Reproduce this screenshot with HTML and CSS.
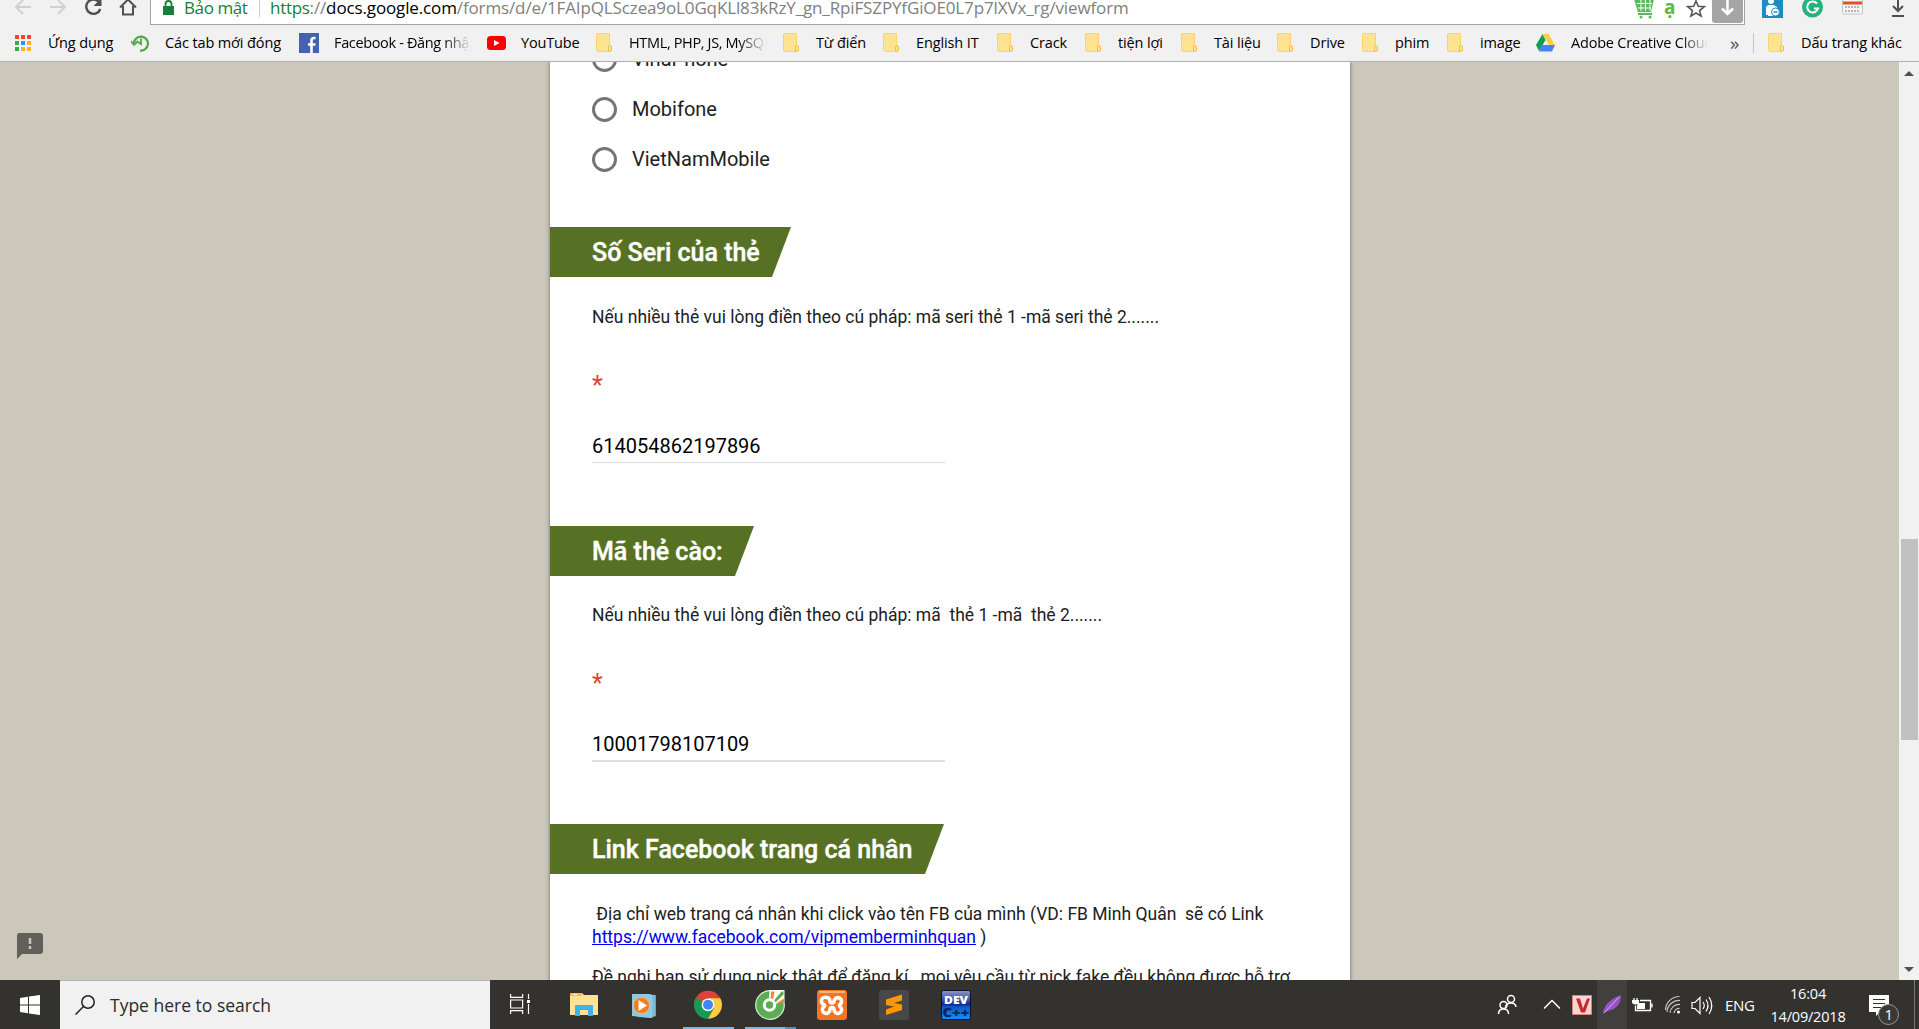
FILE: index.html
```html
<!DOCTYPE html>
<html lang="vi">
<head>
<meta charset="utf-8">
<title>Form</title>
<link rel="stylesheet" href="styles.css">
</head>
<body>
<svg class="defs" width="0" height="0" aria-hidden="true">
  <symbol id="folder" viewBox="0 0 16 19"><path d="M1 .5h12.500v13h2v4l-1 1H1.500l-1-1V1z" fill="#fee391" stroke="#f8d568"/><path d="M12.500 18v-4.500q1.500-1.500 3 0V17l-1 1z" fill="#fee79b" stroke="#eec13f"/></symbol>
</svg>
<div class="screen">
  <header class="toolbar">
    <svg class="nav-icons" width="150" height="25" viewBox="0 0 150 25" fill="none" stroke="#d0d0d0" stroke-width="2">
      <path d="M31 7H16M23 0l-7 7 7 7M50 7h15M58 0l7 7-7 7"/>
      <path d="M99 2a7.200 7.200 0 1 0 1.300 7" stroke="#505050" stroke-width="2.400"/><path d="M101.500 -2v8h-8z" fill="#505050" stroke="none"/>
      <path d="M120 7.500l8-8 8 8M123 6v8.500h10V6" stroke="#505050"/>
    </svg>
    <div class="omnibox">
      <svg class="lock" width="11" height="16" viewBox="0 0 11 16"><path d="M0 6h11v9H0z" fill="#148038"/><path d="M2.500 7V4a3 3 0 0 1 6 0v3" fill="none" stroke="#148038" stroke-width="1.800"/></svg>
      <span class="secure">Bảo mật</span><i class="divider"></i>
      <span class="url"><b>https</b>://<em>docs.google.com</em>/forms/d/e/1FAIpQLSczea9oL0GqKLl83kRzY_gn_RpiFSZPYfGiOE0L7p7lXVx_rg/viewform</span>
      <svg class="omni-icons" width="110" height="24" viewBox="1634 0 110 24">
        <path d="M1634 -1h20l-3 13h-13z" fill="#5cb85c"/><path d="M1637 3.500h15M1638 8h13M1641 0v11M1645.500 0v11M1650 0v11" stroke="#fff"/><path d="M1638 14h14" stroke="#5cb85c" stroke-width="2"/><circle cx="1641" cy="17" r="1.500" fill="#5cb85c"/><circle cx="1650" cy="17" r="1.500" fill="#5cb85c"/>
        <text x="1664" y="13.500" class="viet-a">ạ</text>
        <path d="M1696 1l2.300 5.300 6 .4-4.700 3.900 1.500 5.500-5.100-3.100-5.100 3.100 1.500-5.500-4.700-3.900 6-.4z" fill="none" stroke="#555" stroke-width="1.600"/>
        <path d="M1712 0h31v20q0 3-3 3h-25q-3 0-3-3z" fill="#a5a5a5"/><path d="M1727.500 0v14M1722 8.500l5.500 5.500 5.500-5.500" fill="none" stroke="#fff" stroke-width="2.500"/>
      </svg>
    </div>
    <svg class="ext-icons" width="174" height="25" viewBox="1745 0 174 25">
      <path d="M1762 0h21v18h-21z" fill="#1b8cc4"/><circle cx="1771" cy="1" r="3" fill="#fff"/><path d="M1768 5h6l3 2v8h-3v1h-6v-1h-2V7z" fill="#fff"/><circle cx="1775.500" cy="12" r="4" fill="#fff" stroke="#1b8cc4"/><path d="M1773.500 12h4" stroke="#1b8cc4" stroke-width="1.500"/>
      <circle cx="1812.500" cy="7" r="10.500" fill="#25b27c"/><path d="M1817 3.500a5.500 5.500 0 1 0 1 5h-4" fill="none" stroke="#fff" stroke-width="2"/>
      <rect x="1842.500" y="-2" width="20" height="16" rx="2" fill="#f6f6f6" stroke="#c4c4c4"/><path d="M1843 3h19" stroke="#e3501c" stroke-width="3"/><path d="M1845 7h15M1845 11h15" stroke="#777" stroke-dasharray="2 1"/>
      <path d="M1898 0v11M1893 6l5 5 5-5M1892 16h12" fill="none" stroke="#505050" stroke-width="2"/>
    </svg>
  </header>

  <nav class="bookmarks">
    <a class="bm w1"><svg width="16" height="16" viewBox="0 0 16 16"><path d="M0 0h4v4H0zM6 0h4v4H6zM12 0h4v4h-4z" fill="#f44336"/><path d="M0 6h4v4H0z" fill="#34a853"/><path d="M6 6h4v4H6z" fill="#2196f3"/><path d="M12 6h4v4h-4zM6 12h4v4H6zM12 12h4v4h-4z" fill="#fbb31b"/><path d="M0 12h4v4H0z" fill="#34a853"/></svg><span>Ứng dụng</span></a>
    <a class="bm w2"><svg width="19" height="18" viewBox="0 0 19 18" fill="none" stroke="#4daa43" stroke-width="2.200"><path d="M3 9a7 7 0 1 1 6 7.500"/><path d="M0 7l3 4 4-4M10 4.500V10l-3-2" stroke-width="1.800"/></svg><span>Các tab mới đóng</span></a>
    <a class="bm w3"><svg width="20" height="20" viewBox="0 0 20 20"><path d="M0 0h20v20H0z" fill="#4163b0"/><path d="M16.500 5H15q-2.500 0-2.500 2.500V20M9 11.500h7.500" fill="none" stroke="#fff" stroke-width="2.600"/></svg><span class="fade">Facebook - Đăng nhập</span></a>
    <a class="bm w4"><svg width="19" height="14" viewBox="0 0 19 14"><rect width="19" height="14" rx="3.500" fill="#f00"/><path d="M7 4l5.500 3L7 10z" fill="#fff"/></svg><span>YouTube</span></a>
    <a class="bm w5"><svg width="16" height="19"><use href="#folder"/></svg><span class="fade">HTML, PHP, JS, MySQL</span></a>
    <a class="bm w6"><svg width="16" height="19"><use href="#folder"/></svg><span>Từ điển</span></a>
    <a class="bm w7"><svg width="16" height="19"><use href="#folder"/></svg><span>English IT</span></a>
    <a class="bm w8"><svg width="16" height="19"><use href="#folder"/></svg><span>Crack</span></a>
    <a class="bm w9"><svg width="16" height="19"><use href="#folder"/></svg><span>tiện lợi</span></a>
    <a class="bm w10"><svg width="16" height="19"><use href="#folder"/></svg><span>Tài liệu</span></a>
    <a class="bm w11"><svg width="16" height="19"><use href="#folder"/></svg><span>Drive</span></a>
    <a class="bm w12"><svg width="16" height="19"><use href="#folder"/></svg><span>phim</span></a>
    <a class="bm w13"><svg width="16" height="19"><use href="#folder"/></svg><span>image</span></a>
    <a class="bm w14"><svg width="19" height="18" viewBox="0 0 19 18"><path d="M6.500 0L0 11l3 6L9.500 6z" fill="#109d58"/><path d="M6.500 0h6L19 11h-6z" fill="#ffcd40"/><path d="M6 11h13l-3 6.500H3z" fill="#4285f4"/></svg><span class="fade">Adobe Creative Cloud</span></a>
    <span class="more">»</span>
    <a class="bm last"><svg width="16" height="19"><use href="#folder"/></svg><span>Dấu trang khác</span></a>
  </nav>

  <main class="viewport">
    <aside class="side"><svg width="26" height="26" viewBox="0 0 26 26"><path d="M2 0h21q3 0 3 3v15q0 3-3 3H5l-5 5V3q0-3 2-3z" fill="#605f59"/><path d="M13 5v6M13 13v3" stroke="#cbc8bb" stroke-width="2.500"/></svg></aside>
    <form class="card">
      <div class="options">
        <label class="option"><i class="radio"></i>VinaPhone</label>
        <label class="option"><i class="radio"></i>Mobifone</label>
        <label class="option"><i class="radio"></i>VietNamMobile</label>
      </div>
      <section class="question">
        <h2 class="banner b1"><span>Số Seri của thẻ</span></h2>
        <p class="desc">Nếu nhiều thẻ vui lòng điền theo cú pháp: mã seri thẻ 1 -mã seri thẻ 2.......</p>
        <div class="required">*</div>
        <div class="answer">614054862197896</div>
      </section>
      <section class="question second">
        <h2 class="banner b2"><span>Mã thẻ cào:</span></h2>
        <p class="desc">Nếu nhiều thẻ vui lòng điền theo cú pháp: mã&nbsp; thẻ 1 -mã&nbsp; thẻ 2.......</p>
        <div class="required">*</div>
        <div class="answer thick">10001798107109</div>
      </section>
      <section class="question">
        <h2 class="banner b3"><span>Link Facebook trang cá nhân</span></h2>
        <p class="desc">&nbsp;Địa chỉ web trang cá nhân khi click vào tên FB của mình (VD: FB Minh Quân&nbsp; sẽ có Link<br><a class="link">https://www.facebook.com/vipmemberminhquan</a> )</p>
        <p class="desc next">Đề nghị bạn sử dụng nick thật để đăng kí , mọi yêu cầu từ nick fake đều không được hỗ trợ</p>
      </section>
    </form>
    <div class="scrollbar"><i class="up"></i><i class="thumb"></i><i class="down"></i></div>
  </main>

  <footer class="taskbar">
    <div class="start"><svg width="20" height="20" viewBox="0 0 20 20" fill="#fff"><path d="M0 3l8-1.200v7.700H0zM9 1.600L20 0v9.500H9zM0 10.500h8v7.700L0 17zM9 10.500h11V20L9 18.400z"/></svg></div>
    <div class="search"><svg width="20" height="20" viewBox="0 0 20 20" fill="none" stroke="#222" stroke-width="1.500"><circle cx="13" cy="7" r="6.200"/><path d="M8.500 11.500L.5 19.500"/></svg><span>Type here to search</span></div>
    <div class="apps">
      <div class="app view"><svg width="20" height="20" viewBox="0 0 20 20" fill="none" stroke="#fff" stroke-width="1.200"><path d="M.6 0v3.400h12V0M.6 20v-3.400h12V20M.6 6h12v8H.6zM18.500 0v5M18.500 10v10"/><path d="M17 6h3v3h-3z" fill="#fff" stroke="none"/></svg></div>
      <div class="app"><svg width="30" height="30" viewBox="0 0 30 30"><path d="M1 3h12l2 2h14v20H1z" fill="#ffe394"/><path d="M1 3h12v3H1z" fill="#fbbf2d"/><path d="M4 4h4v1H4z" fill="#fff"/><path d="M6 26V15h18v11h-5v-6h-8v6z" fill="#3bb3e8"/></svg></div>
      <div class="app media"><svg width="30" height="30" viewBox="0 0 30 30"><path d="M8 4l19 1v21l-5 2L8 27z" fill="#5ba6c8"/><path d="M3 4h18l2 1v23L3 26z" fill="#91c8de"/><path d="M23 5v22M25 5v21" stroke="#9ed3e8"/><circle cx="12.500" cy="15.500" r="8" fill="#f47b20" stroke="#fdcfa6" stroke-width=".5"/><path d="M9.500 10l8.500 5.500L9.500 21z" fill="#fff"/></svg></div>
      <div class="app on"><svg width="30" height="30" viewBox="0 0 30 30"><circle cx="15" cy="14.800" r="14" fill="#db4437"/><path d="M2.900 7.800A14 14 0 0 0 15 28.800L21 18.300 15 15z" fill="#0f9d58"/><path d="M15 28.800A14 14 0 0 0 27.300 8.300H15l6 10z" fill="#ffcd40"/><circle cx="15" cy="14.800" r="6.400" fill="#fff"/><circle cx="15" cy="14.800" r="5" fill="#4285f4"/></svg></div>
      <div class="app on split"><svg width="30" height="30" viewBox="0 0 30 30"><circle cx="15" cy="15" r="14.300" fill="#5bad52" stroke="#d8edd5" stroke-width="1.200"/><path d="M14 10L14.500 0H29.500v11L19 15z" fill="#fff"/><path d="M15.500 9.500L16 1.500h3.500L18 10z" fill="#f0873a"/><path d="M19 10.500L26.500 1.500h2v3l-8 8z" fill="#5bad52"/><path d="M21 13.500l8-5v3.500l-6 2z" fill="#f0873a"/><circle cx="14.500" cy="15" r="5.200" fill="#5bad52" stroke="#fff" stroke-width="3"/></svg></div>
      <div class="app"><svg width="30" height="30" viewBox="0 0 30 30"><rect width="30" height="30" rx="3" fill="#f37423"/><path d="M2 1h26v2H2z" fill="#f9b27f"/><path d="M9 7.500a3.500 3.500 0 0 1 4 3.500q0 2 2 2t2-2a3.800 3.800 0 1 1 6 3.500q-1 1 0 2a3.800 3.800 0 1 1-6 3q0-2-2-2t-2 2a3.800 3.800 0 1 1-6-3q1-1 0-2a3.500 3.500 0 0 1 2-7z" fill="none" stroke="#fff" stroke-width="3.600"/></svg></div>
      <div class="app"><svg width="30" height="30" viewBox="0 0 30 30"><rect width="30" height="30" rx="2" fill="#48484a"/><path d="M7 9.500l16-5v6l-8 2.500 8 1.500v5.500L7 25v-5.500l8-3-8-1.500z" fill="#ff9800"/></svg></div>
      <div class="app"><svg width="30" height="30" viewBox="0 0 30 30"><defs><linearGradient id="dev" x2="0" y2="1"><stop offset="0" stop-color="#8d97c8"/><stop offset=".5" stop-color="#122a8c"/><stop offset=".55" stop-color="#0a56c8"/><stop offset="1" stop-color="#1590ff"/></linearGradient></defs><rect x=".5" y=".5" width="29" height="29" rx="2" fill="url(#dev)" stroke="#06122e"/><text x="3" y="13.500" class="dev-text" textLength="24" lengthAdjust="spacingAndGlyphs">DEV</text><text x="1.500" y="27" class="cpp-text" textLength="27" lengthAdjust="spacingAndGlyphs">C++</text></svg></div>
    </div>
    <svg class="tray" width="238" height="49" viewBox="1487 980 238 49" fill="none" stroke="#fff" stroke-width="1.500">
      <circle cx="1511" cy="999" r="3.500"/><path d="M1505.500 1007q1-4 5.500-4t5 4"/><circle cx="1503.500" cy="1005" r="3.500"/><path d="M1498.500 1014q0-5 5-5t5 5"/>
      <path d="M1544 1008.500l8-8 8 8"/>
      <path d="M1572.500 995.500h19v19h-19z" fill="#f9d4d1" stroke="#da817c" stroke-width="1"/><path d="M1576 998.500h4l3 10 4-10h3l-5 14h-4z" fill="#c52b28" stroke="none"/>
      <path d="M1597 980h30v49h-30z" fill="#42403d" stroke="none"/><path d="M1603 1014q1-13 18-19 0 13-13 16-3 1-5 3z" fill="#9653c6" stroke="none"/><path d="M1604 1013l15-16" stroke="#d7a9ef" stroke-width="1"/>
      <path d="M1640 1000.500h10.500v10h-15v-5M1652 1003.500v4M1634 998v3M1637 998v3" stroke-width="1.300"/><path d="M1632 1000h7v3q-3.500 3-7 0zM1638 1003h7v6h-8v-3z" fill="#fff" stroke="none"/>
      <path d="M1665.500 1010a14 14 0 0 1 14-13.500M1667 1012a12 12 0 0 1 13-11.500M1670 1013a9 9 0 0 1 10-8.500M1674 1013a5 5 0 0 1 5.500-4.500" stroke="#c9c9c7" stroke-width="1.200"/><circle cx="1678.500" cy="1012" r="1.500" fill="#fff" stroke="none"/>
      <path d="M1692 1002.500h3l5-5v16l-5-5h-3zM1703 1002q2.500 3.500 0 7M1706 999.500q4 6 0 12M1709 997q5.500 8.500 0 17" stroke-width="1.200"/>
    </svg>
    <span class="lang">ENG</span>
    <div class="clock"><span>16:04</span><span class="date">14/09/2018</span></div>
    <svg class="notice" width="60" height="49" viewBox="1859 980 60 49"><path d="M1869 995h20v17h-9l-4 4v-4h-7z" fill="#fff"/><path d="M1873 999.500h12M1873 1003.500h12M1873 1007.500h8" stroke="#34322e"/><circle cx="1888.500" cy="1014.500" r="10" fill="#3b3935" stroke="#9a9994"/><text x="1884.500" y="1020" class="count">1</text><path d="M1914.500 980v49" stroke="#77756f"/></svg>
  </footer>
</div>
</body>
</html>
```
FILE: styles.css
```css
* { box-sizing: border-box; }
body { margin: 0; font-family: "Open Sans", "Noto Sans", sans-serif; }
svg { display: block; flex: none; }
.defs { position: absolute; }
.screen { width: 1919px; height: 1029px; display: flex; flex-direction: column; overflow: hidden; background: #f1f1f1; }

.toolbar { height: 25px; flex: none; display: flex; overflow: hidden; }
.omnibox { width: 1595px; height: 25px; display: flex; align-items: flex-start; background: #fff; border: solid #a3a3a3; border-width: 0 1px 1px; padding-left: 12px; white-space: nowrap; }
.secure, .url { font-size: 17px; line-height: 24px; margin-top: -4px; }
.secure { width: 75px; margin-left: 10px; color: #148038; letter-spacing: -.4px; }
.divider { width: 1px; height: 17px; background: #ccc; margin-right: 10px; }
.url { width: 1364px; color: #808080; letter-spacing: -.13px; }
.url b { font-weight: 400; color: #148038; letter-spacing: -.3px; }
.url em { font-style: normal; color: #000; }
.viet-a { font: 700 19px "Open Sans", sans-serif; fill: #5dba3c; }

.bookmarks { height: 37px; flex: none; display: flex; align-items: center; padding-left: 15px; padding-bottom: 1px; border-bottom: 1px solid #aeb0ae; font-size: 14.500px; letter-spacing: -.12px; color: #000; white-space: nowrap; }
.bm { display: flex; align-items: center; flex: none; gap: 17px; }
.w1 { width: 116px; } .w2 { width: 168px; gap: 15px; } .w3 { width: 188px; gap: 15px; } .w4 { width: 109px; gap: 15px; letter-spacing: -.15px; }
.w5 { width: 187px; } .w6 { width: 100px; } .w7 { width: 114px; } .w8 { width: 88px; } .w9 { width: 96px; }
.w10 { width: 96px; } .w11 { width: 85px; } .w12 { width: 85px; } .w13 { width: 89px; } .w14 { width: 194px; gap: 16px; }
.w3 .fade, .w5 .fade { letter-spacing: -.35px; }
.w14 .fade { letter-spacing: -.2px; }
.fade { width: 137px; overflow: hidden; mask-image: linear-gradient(90deg, #000 80%, transparent); }
.more { width: 23px; font-size: 19px; line-height: 20px; color: #555; }
.last { border-left: 1px solid #c6c6c6; height: 20px; padding-left: 14px; }

.viewport { height: 918px; flex: none; display: flex; overflow: hidden; background: #cbc8bb; font-family: Roboto, sans-serif; }
.side { width: 550px; flex: none; display: flex; align-items: flex-end; padding: 0 0 21px 17px; }
.card { width: 800px; height: 1000px; flex: none; margin: 0 auto 0 0; background: #fff; box-shadow: 0 0 4px rgba(0,0,0,.5); color: #212121; }
.options { margin-top: -28px; height: 193px; }
.option { height: 50px; display: flex; align-items: center; gap: 15px; padding-left: 42px; font-size: 20px; }
.radio { width: 25px; height: 25px; border: 3px solid #757575; border-radius: 50%; }
.question { height: 299px; }
.second { height: 298px; }
.banner { height: 50px; margin: 0; background: #577124; color: #fff; font-size: 25px; font-weight: 500; -webkit-text-stroke: .4px #fff; line-height: 52px; padding-left: 42px; clip-path: polygon(0 0, 100% 0, calc(100% - 19px) 100%, 0 100%); white-space: nowrap; }
.b1 { width: 241px; } .b2 { width: 204px; } .b3 { width: 394px; }
.desc { margin: 29px 0 0 42px; font-size: 17.500px; line-height: 23px; white-space: nowrap; }
.second .desc { margin-top: 28px; }
.next { margin-top: 17px; }
.link { color: #00e; text-decoration: underline; }
.required { margin: 42px 0 0 42px; height: 32px; line-height: 30px; font-size: 25px; color: #db4437; }
.answer { width: 353px; height: 60px; margin: 0 0 0 42px; border-bottom: 1px solid #dbdbdb; padding-top: 31px; line-height: 24px; font-size: 20px; color: #000; }
.thick { height: 61px; border-bottom: 2px solid #dedede; }
.scrollbar { width: 20px; display: flex; flex-direction: column; align-items: center; background: #f1f1f1; padding: 9px 0 8px; }
.up, .down { border: 5px solid transparent; height: 5px; }
.up { border-top: 0; border-bottom-color: #505050; }
.down { border-bottom: 0; border-top-color: #505050; margin-top: auto; }
.thumb { width: 17px; height: 201px; margin-top: 463px; background: #c1c1c1; }

.taskbar { height: 49px; flex: none; display: flex; background: #34322e; color: #fff; }
.start { width: 60px; display: flex; align-items: center; justify-content: center; }
.search { width: 430px; display: flex; align-items: center; gap: 15px; padding-left: 15px; background: #f1f1f1; border-top: 1px solid #b4b4b4; color: #2b2b2b; font-size: 17.500px; }
.apps { display: flex; width: 997px; }
.app { width: 62px; padding-top: 10px; display: flex; justify-content: center; }
.view { width: 64px; padding: 14px 4px 0 0; }
.view + .app { margin-left: -1px; }
.media { padding-right: 4px; }
.on { background: linear-gradient(#76b9ed, #76b9ed) 6px 47px / 51px 2px no-repeat; }
.split { background: linear-gradient(90deg, #76b9ed 40px, #5a8fb8 40px) 6px 47px / 51px 2px no-repeat; }
.dev-text { font: 800 11px "Open Sans", sans-serif; fill: #fff; }
.cpp-text { font: 800 13px "Open Sans", sans-serif; fill: #04245e; }
.lang { width: 34px; line-height: 50px; font-size: 15px; letter-spacing: -.3px; }
.clock { width: 100px; display: flex; flex-direction: column; align-items: center; padding: 2px 2px 0 0; font-size: 14.500px; line-height: 23px; letter-spacing: -.2px; }
.count { font: 15px "Open Sans", sans-serif; fill: #fff; }
```
